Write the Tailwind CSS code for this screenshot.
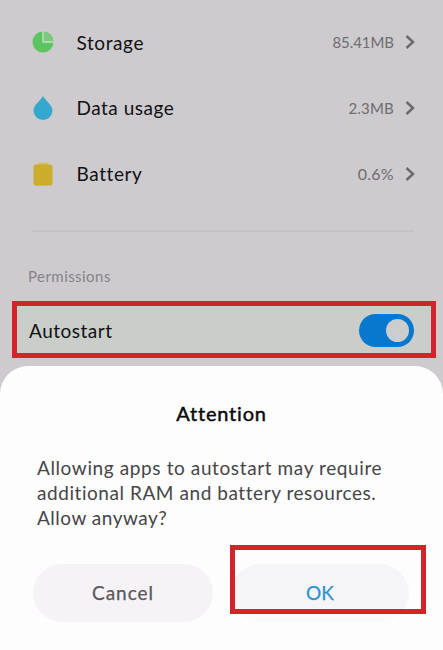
<!DOCTYPE html>
<html lang="en">
<head>
<meta charset="utf-8">
<title>App info</title>
<script src="https://cdn.jsdelivr.net/npm/@tailwindcss/browser@4"></script>
</head>
<body class="relative w-[443px] h-[650px] overflow-hidden bg-[#cdcbcd] font-['Lato',sans-serif] text-[#111113]">
  <main class="pt-[9px]">
    <ul class="pl-8 pr-7">
      <li class="flex h-[66px] items-center">
        <svg class="w-[22px] h-[22px]" viewBox="0 0 22 22"><circle cx="11" cy="11" r="10.5" fill="#5cc460"/><path d="M11 0.5A10.5 10.5 0 0 1 21.5 11H11Z" fill="#7cc87f"/><path d="M11 0V11H22" fill="none" stroke="#c0e2c0" stroke-width="1.3"/></svg>
        <span class="ml-[22.5px] pt-[2px] text-[19px] tracking-[0.6px]">Storage</span>
        <span class="ml-auto text-[15px] tracking-[-0.05px] text-[#6f6d70]">85.41MB</span>
        <svg class="ml-[11px] w-[10px] h-[16px]" viewBox="0 0 10 16" fill="none" stroke="#6b696c" stroke-width="2.4"><path d="M1.500 2 8 8l-6.500 6"/></svg>
      </li>
      <li class="flex h-[66px] items-center">
        <svg class="w-[22px] h-[24px]" viewBox="0 0 22 24"><path d="M11 0C13 4 20.5 9 20.5 14.5A9.5 9.5 0 0 1 1.500 14.500C1.500 9 9 4 11 0Z" fill="#34a9cd"/></svg>
        <span class="ml-[22.5px] text-[19px] tracking-[0.5px]">Data usage</span>
        <span class="ml-auto text-[15px] tracking-[0.2px] text-[#6f6d70]">2.3MB</span>
        <svg class="ml-[11px] w-[10px] h-[16px]" viewBox="0 0 10 16" fill="none" stroke="#6b696c" stroke-width="2.4"><path d="M1.500 2 8 8l-6.500 6"/></svg>
      </li>
      <li class="flex h-[65px] items-center">
        <svg class="w-[22px] h-[24px]" viewBox="0 0 22 24"><path d="M6 3V1.500Q6 .5 7 .5H15Q16 .5 16 1.500V3Z" fill="#d6bf62"/><rect x="1.500" y="2.500" width="19" height="21" rx="2.500" fill="#cbad2b"/></svg>
        <span class="ml-[22.5px] pt-[2px] text-[19px] tracking-[0.6px]">Battery</span>
        <span class="ml-auto text-[16px] tracking-[0.3px] text-[#6f6d70]">0.6%</span>
        <svg class="ml-[11px] w-[10px] h-[16px]" viewBox="0 0 10 16" fill="none" stroke="#6b696c" stroke-width="2.4"><path d="M1.500 2 8 8l-6.500 6"/></svg>
      </li>
    </ul>
    <hr class="mt-[24px] ml-8 mr-[29px] h-[2px] border-0 bg-[#c4c2c5]">
    <h2 class="mt-[34px] ml-[28px] h-[20px] leading-5 text-[15px] tracking-[0.45px] text-[#858387]">Permissions</h2>
    <section class="mt-[15px] ml-3 mr-[7px] flex h-[57px] items-center border-5 border-[#d5232b] pl-3 pr-[17px] pt-[2px] bg-[#cacdca]">
      <span class="pt-px text-[19px] tracking-[0.5px]">Autostart</span>
      <span class="ml-auto flex h-[33px] w-[55px] items-center justify-end rounded-full bg-[#0878cf] pr-[5px]"><span class="h-[23px] w-[23px] rounded-full bg-[#cccdce]"></span></span>
    </section>
  </main>
  <section class="mt-2 h-[284px] rounded-t-[28px] bg-[#fefdfe] pt-[35px]" role="dialog">
    <h1 class="text-center leading-[25px] text-[20px] tracking-[0.8px] text-[#09090b] [-webkit-text-stroke:0.45px]">Attention</h1>
    <p class="mt-[29px] ml-[37px] whitespace-nowrap text-[19px] leading-[25px] text-[#464548]"><span class="tracking-[0.61px]">Allowing apps to autostart may require</span><br><span class="tracking-[0.56px]">additional RAM and battery resources.</span><br><span class="tracking-[0.5px]">Allow anyway?</span></p>
    <div class="mt-[34px] ml-[33px] flex gap-[18px]">
      <button class="h-[58px] w-[180px] rounded-full bg-[#f5f3f6] text-[19px] tracking-[0.95px] text-[#59575b] [-webkit-text-stroke:0.25px]">Cancel</button>
      <button class="h-[58px] w-[178px] rounded-full bg-[linear-gradient(#f5f4f7_50px,#f9fbfb_50px)] text-[19px] text-[#2d93cb] [-webkit-text-stroke:0.25px]">OK</button>
    </div>
  </section>
  <div class="absolute left-[230px] top-[545px] h-[69px] w-[196px] border-5 border-[#d5232b]"></div>
</body>
</html>
